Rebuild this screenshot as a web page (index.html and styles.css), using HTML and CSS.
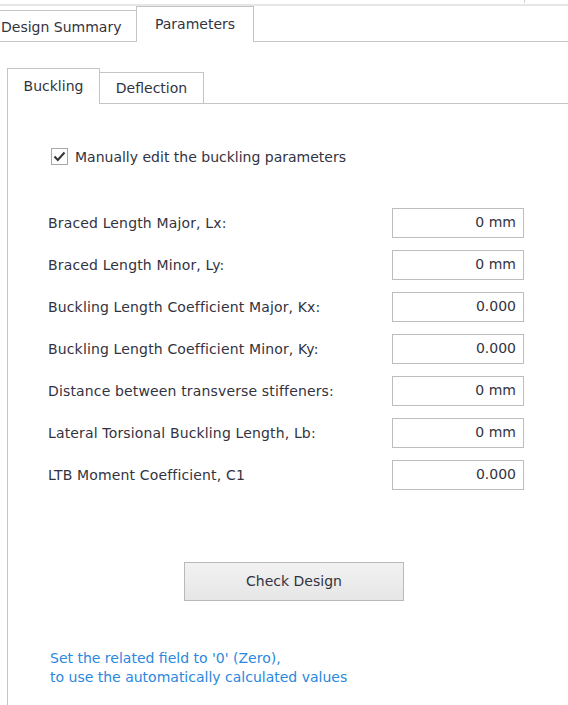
FILE: index.html
```html
<!DOCTYPE html>
<html>
<head>
<meta charset="utf-8">
<link rel="stylesheet" href="styles.css">
</head>
<body>
<div class="topline"><div class="tick"></div></div>
<div class="tabbar">
  <div class="tab tab-summary">Design Summary</div>
  <div class="tab tab-active tab-params">Parameters</div>
</div>
<div class="page">
  <div class="subtabbar">
    <div class="subtab subtab-active">Buckling</div>
    <div class="subtab">Deflection</div>
  </div>
  <div class="panel">
    <label class="check-row">
      <span class="checkbox">
        <svg width="13" height="11" viewBox="0 0 13 11"><path d="M1.5 5.5 L4.8 9 L11.5 1.5" fill="none" stroke="#333" stroke-width="2"/></svg>
      </span>
      <span>Manually edit the buckling parameters</span>
    </label>
    <div class="fields">
      <div class="row"><span class="label">Braced Length Major, Lx:</span><span class="input">0 mm</span></div>
      <div class="row"><span class="label">Braced Length Minor, Ly:</span><span class="input">0 mm</span></div>
      <div class="row"><span class="label">Buckling Length Coefficient Major, Kx:</span><span class="input">0.000</span></div>
      <div class="row"><span class="label">Buckling Length Coefficient Minor, Ky:</span><span class="input">0.000</span></div>
      <div class="row"><span class="label">Distance between transverse stiffeners:</span><span class="input">0 mm</span></div>
      <div class="row"><span class="label">Lateral Torsional Buckling Length, Lb:</span><span class="input">0 mm</span></div>
      <div class="row"><span class="label">LTB Moment Coefficient, C1</span><span class="input">0.000</span></div>
    </div>
    <div class="btn-wrap"><div class="button">Check Design</div></div>
    <div class="note">Set the related field to '0' (Zero),<br>to use the automatically calculated values</div>
  </div>
</div>
</body>
</html>
```
FILE: styles.css
```css
html, body {
  margin: 0;
  padding: 0;
  background: #fff;
  width: 568px;
  height: 705px;
  overflow: hidden;
}
body {
  font-family: "DejaVu Sans", Verdana, sans-serif;
  font-size: 14px;
  color: #33333f;
}
.topline {
  height: 4px;
  border-bottom: 2px solid #e6e6e6;
}
.tick {
  width: 524px;
  height: 3px;
  border-right: 1px solid #d0d0d0;
}
.tabbar {
  display: flex;
  align-items: flex-end;
  height: 35px;
  border-bottom: 1px solid #c4c4c4;
}
.tab {
  box-sizing: border-box;
  border: 1px solid #c4c4c4;
  border-bottom: none;
  display: flex;
  align-items: center;
  background: #fff;
}
.tab-summary {
  width: 137px;
  height: 31px;
  border-left: none;
  padding-left: 1px;
  padding-top: 1px;
}
.tab-params {
  width: 118px;
  height: 35px;
  margin-left: -1px;
  margin-bottom: -1px;
  justify-content: center;
  padding-bottom: 1px;
}
.tab-active {
  height: 36px;
}
.page {
  padding-left: 7px;
  padding-top: 26px;
}
.subtabbar {
  display: flex;
  align-items: flex-end;
  height: 35px;
}
.subtab {
  box-sizing: border-box;
  height: 31px;
  width: 105px;
  border: 1px solid #c4c4c4;
  border-bottom: none;
  display: flex;
  align-items: center;
  justify-content: center;
  margin-left: -1px;
  padding-top: 0;
}
.subtab-active {
  width: 93px;
  height: 36px;
  margin-left: 0;
  margin-bottom: -1px;
  background: #fff;
  position: relative;
  z-index: 1;
  padding-top: 0;
  padding-bottom: 2px;
}
.panel {
  border-left: 1px solid #c4c4c4;
  border-top: 1px solid #c4c4c4;
  height: 620px;
  padding-left: 43px;
  box-sizing: border-box;
}
.check-row {
  display: flex;
  align-items: center;
  gap: 7px;
  margin-top: 43px;
  height: 19px;
}
.checkbox {
  width: 15px;
  height: 15px;
  border: 1px solid #a8a8a8;
  background: #fff;
  display: flex;
  align-items: center;
  justify-content: center;
}
.fields {
  margin-top: 42px;
  margin-left: -3px;
  display: flex;
  flex-direction: column;
  gap: 12px;
}
.label {
  letter-spacing: 0.15px;
}
.row {
  display: flex;
  align-items: center;
  justify-content: space-between;
  width: 476px;
  height: 30px;
}
.input {
  box-sizing: border-box;
  width: 132px;
  height: 30px;
  border: 1px solid #bdbdbd;
  display: flex;
  align-items: center;
  justify-content: flex-end;
  padding-right: 7px;
  padding-bottom: 2px;
}
.btn-wrap {
  margin-top: 72px;
  padding-left: 133px;
}
.button {
  box-sizing: border-box;
  width: 220px;
  height: 39px;
  border: 1px solid #b9b9b9;
  background: linear-gradient(#f2f2f2, #e6e6e6);
  display: flex;
  align-items: center;
  justify-content: center;
  font-size: 14px;
  padding-bottom: 1px;
}
.note {
  margin-top: 48px;
  margin-left: -1px;
  color: #2a88de;
  line-height: 19px;
}
```
